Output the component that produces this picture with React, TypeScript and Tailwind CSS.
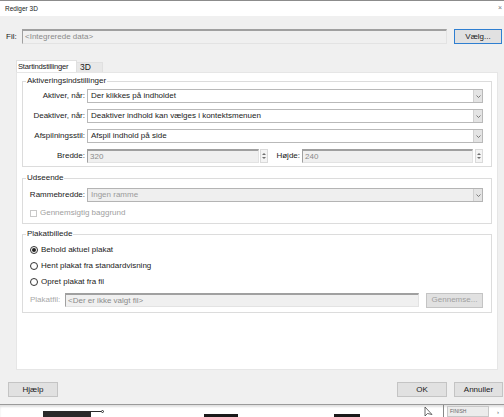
import React from "react";

/* =====================
   SMALL WIN32-ISH CONTROLS
===================== */
function Chevron({ className = "" }: { className?: string }) {
  return (
    <svg width="5" height="3" viewBox="0 0 5 3" className={className}>
      <path d="M0.5 0.5 L2.5 2.5 L4.5 0.5" fill="none" stroke="#606060" strokeWidth="0.8" />
    </svg>
  );
}

function Combo({ value, disabled = false }: { value: string; disabled?: boolean }) {
  return (
    <div
      className={[
        "flex-1 h-[14px] flex items-center border",
        disabled ? "bg-[#efefef] border-[#b4b4b4] text-[#9a9a9a]" : "bg-white border-[#b9b9b9] text-[#1a1a1a]",
      ].join(" ")}
    >
      <span className="flex-1 pl-[3px] truncate">{value}</span>
      <div className="w-[9px] h-full flex items-center justify-center bg-[#e4e4e4] border-l border-[#d0d0d0]">
        <Chevron />
      </div>
    </div>
  );
}

function SunkenInput({ value, className = "" }: { value: string; className?: string }) {
  return (
    <div
      className={[
        "h-[14px] flex items-center bg-[#f0f0f0] border-t-2 border-l border-t-[#a0a0a0] border-l-[#a0a0a0] border-b border-r border-b-[#e3e3e3] border-r-[#e3e3e3] text-[#8a8a8a] pl-[2px]",
        className,
      ].join(" ")}
    >
      {value}
    </div>
  );
}

function Spinner() {
  return (
    <div className="w-[8px] h-[14px] flex flex-col items-center justify-center gap-[2px] bg-[#f4f4f4] border border-[#dadada]">
      <svg width="4" height="2" viewBox="0 0 4 2">
        <path d="M0 2 L2 0 L4 2Z" fill="#707070" />
      </svg>
      <svg width="4" height="2" viewBox="0 0 4 2">
        <path d="M0 0 L2 2 L4 0Z" fill="#707070" />
      </svg>
    </div>
  );
}

function Btn({
  label,
  className = "",
  disabled = false,
  focused = false,
}: {
  label: string;
  className?: string;
  disabled?: boolean;
  focused?: boolean;
}) {
  return (
    <div
      className={[
        "h-[15px] flex items-center justify-center border",
        focused ? "border-[#2f7fd1] bg-[#e1e1e1]" : "border-[#c4c4c4] bg-[#e1e1e1]",
        disabled ? "text-[#a0a0a0] bg-[#cccccc] border-[#bfbfbf]" : "text-[#1a1a1a]",
        className,
      ].join(" ")}
    >
      {label}
    </div>
  );
}

function Radio({ label, checked = false }: { label: string; checked?: boolean }) {
  return (
    <div className="h-[12px] flex items-center gap-[3px]">
      <div className="w-[8px] h-[8px] rounded-full border border-[#333] bg-white flex items-center justify-center">
        {checked && <div className="w-[4px] h-[4px] rounded-full bg-[#222]" />}
      </div>
      <span>{label}</span>
    </div>
  );
}

function Row({ label, children }: { label: string; children: React.ReactNode }) {
  return (
    <div className="flex items-center h-[14px]">
      <div className="w-[63px] text-right pr-[2px] shrink-0">{label}</div>
      {children}
    </div>
  );
}

function Group({
  title,
  className = "",
  children,
}: {
  title: string;
  className?: string;
  children: React.ReactNode;
}) {
  return (
    <fieldset className={["border border-[#dcdcdc] mx-[5px] pl-[1px] pr-[8px]", className].join(" ")}>
      <legend className="ml-[2px] px-[1px] leading-[10px] text-[#1a1a1a]">{title}</legend>
      {children}
    </fieldset>
  );
}

export default function App() {
  return (
    <div
      className="w-[504px] h-[417px] overflow-hidden flex flex-col bg-white text-[8px] text-[#1a1a1a]"
      style={{ fontFamily: '"Liberation Sans", Arial, sans-serif' }}
    >
      {/* TITLE BAR */}
      <div className="h-[16px] shrink-0 bg-white border-t border-[#8c8c8c] flex items-center px-[5px]">
        <span className="text-[6.5px] flex-1">Rediger 3D</span>
        <span className="text-[7px] text-[#777] -mr-[3px]">×</span>
      </div>

      {/* BODY */}
      <div className="h-[388px] shrink-0 bg-[#f0f0f0] flex flex-col">
        {/* FIL ROW */}
        <div className="mt-[13px] flex items-center h-[15px] pl-[6px] pr-[2px]">
          <span className="w-[16px]">Fil:</span>
          <SunkenInput value="<Integrerede data>" className="flex-1 h-[15px]" />
          <Btn label="Vælg..." focused className="w-[48px] ml-[7px]" />
        </div>

        {/* TABS */}
        <div className="mt-[16px] ml-[16px] mr-[6px] flex flex-col">
          <div className="flex items-end h-[12px]">
            <div className="w-[61px] h-[12px] bg-white border-t border-l border-r border-[#e0e0e0] flex items-center pl-[1px] text-[7.6px] tracking-[-0.2px] whitespace-nowrap overflow-hidden">
              Startindstillinger
            </div>
            <div className="w-[26px] h-[10px] bg-[#e8e8e8] border-t border-r border-[#e0e0e0] flex items-center pl-[3px] text-[8.5px]">
              3D
            </div>
          </div>

          {/* PANEL */}
          <div className="h-[298px] bg-white border border-[#e6e6e6] flex flex-col pt-[3px]">
            <Group title="Aktiveringsindstillinger" className="pt-[3px] pb-[3px]">
              <div className="flex flex-col gap-[6px]">
                <Row label="Aktiver, når:">
                  <Combo value="Der klikkes på indholdet" />
                </Row>
                <Row label="Deaktiver, når:">
                  <Combo value="Deaktiver indhold kan vælges i kontektsmenuen" />
                </Row>
                <Row label="Afspilningsstil:">
                  <Combo value="Afspil indhold på side" />
                </Row>
                <Row label="Bredde:">
                  <SunkenInput value="320" className="w-[172px]" />
                  <div className="ml-[1px]">
                    <Spinner />
                  </div>
                  <span className="w-[34px] text-right pr-[2px]">Højde:</span>
                  <SunkenInput value="240" className="flex-1" />
                  <div className="ml-[2px]">
                    <Spinner />
                  </div>
                </Row>
              </div>
            </Group>

            <Group title="Udseende" className="mt-[6px] pt-[5px] pb-[5px]">
              <div className="flex flex-col gap-[6px]">
                <Row label="Rammebredde:">
                  <Combo value="Ingen ramme" disabled />
                </Row>
                <div className="h-[10px] flex items-center gap-[3px] pl-[6px] text-[#a0a0a0]">
                  <div className="w-[7px] h-[7px] border border-[#c8c8c8] bg-white" />
                  <span>Gennemsigtig baggrund</span>
                </div>
              </div>
            </Group>

            <Group title="Plakatbillede" className="mt-[5px] pt-[5px] pb-[5px]">
              <div className="flex flex-col gap-[4px] pl-[6px]">
                <Radio label="Behold aktuel plakat" checked />
                <Radio label="Hent plakat fra standardvisning" />
                <Radio label="Opret plakat fra fil" />
                <div className="flex items-center h-[14px] mt-[1px]">
                  <span className="w-[35px] text-[#a8a8a8]">Plakatfil:</span>
                  <SunkenInput value="<Der er ikke valgt fil>" className="flex-1 h-[13px]" />
                  <Btn label="Gennemse..." disabled className="w-[57px] ml-[7px] h-[14px]" />
                </div>
              </div>
            </Group>
          </div>
        </div>

        {/* BUTTON ROW */}
        <div className="mt-[12px] flex items-center px-[8px] pr-[1px]">
          <Btn label="Hjælp" className="w-[50px]" />
          <div className="flex-1" />
          <Btn label="OK" className="w-[50px]" />
          <Btn label="Annuller" className="w-[49px] ml-[7px]" />
        </div>
      </div>

      {/* BACKGROUND APP PEEKING BELOW */}
      <div className="flex-1 bg-white border-t border-[#9a9a9a] shadow-[inset_0_2px_2px_rgba(0,0,0,0.12)] relative flex items-end">
        <div className="ml-[43px] mb-0 w-[48px] h-[6px] bg-[#2a2a2a]" />
        <div className="w-[10px] h-[1px] bg-[#2a2a2a] mb-[5px]" />
        <div className="w-[3px] h-[3px] rounded-full border border-[#2a2a2a] mb-[4px]" />
        <div className="ml-[100px] w-[34px] h-[3px] bg-[#1a1a1a]" />
        <div className="ml-[96px] w-[26px] h-[3px] bg-[#1a1a1a]" />
        <div className="ml-[64px] mb-0 h-[10px] flex items-end">
          <svg width="10" height="10" viewBox="0 0 10 10">
            <path d="M1 0 L1 9 L3.5 6.5 L8 7.5Z" fill="white" stroke="#444" strokeWidth="0.8" />
          </svg>
        </div>
        <div className="ml-[9px] w-[1px] h-[12px] bg-[#888]" />
        <div className="ml-[3px] w-[42px] h-[11px] bg-[#ececec] border border-[#c8c8c8] text-[5px] text-[#666] pl-[2px] leading-[9px]">
          FINISH
        </div>
        <div className="ml-[8px] text-[6px] text-[#555] leading-[10px]">›</div>
      </div>
    </div>
  );
}
